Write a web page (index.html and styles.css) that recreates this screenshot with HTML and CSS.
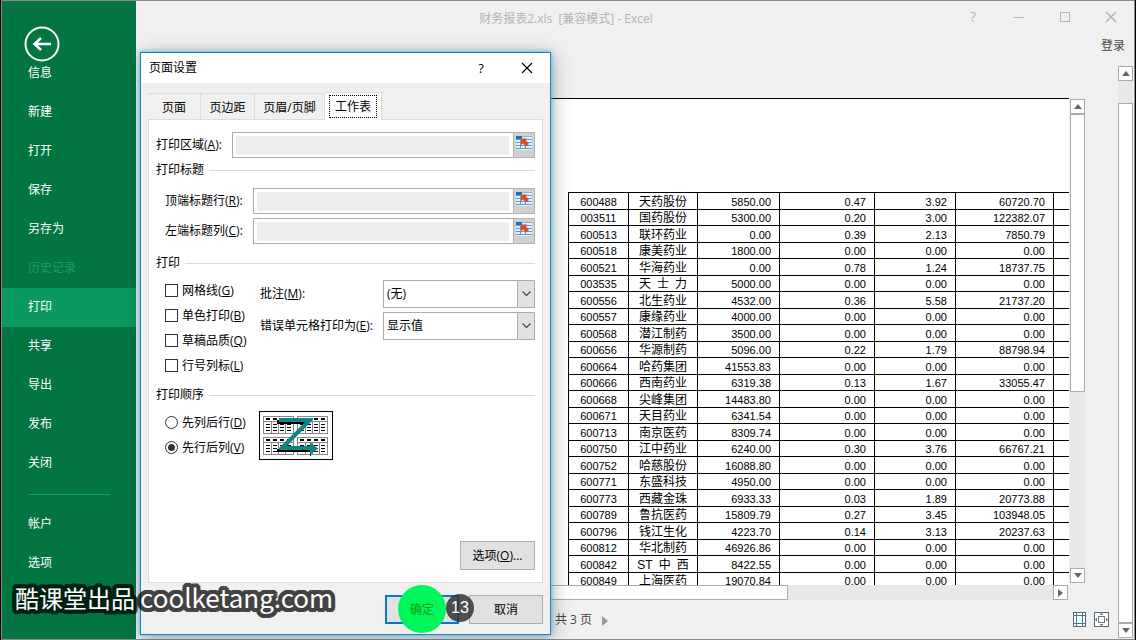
FILE: index.html
```html
<!DOCTYPE html>
<html lang="zh-CN">
<head>
<meta charset="utf-8">
<title>财务报表2.xls [兼容模式] - Excel</title>
<link rel="stylesheet" href="styles.css">
</head>
<body>
<div class="window">
  <aside class="sidebar">
    <button class="back" type="button" aria-label="返回">
      <svg width="36" height="36" viewBox="0 0 36 36" fill="none" stroke="#fff"><circle cx="18" cy="18" r="16.5" stroke-width="2"/><path d="M10.500 18H27M17 12L10.500 18L17 24" stroke-width="2.500"/></svg>
    </button>
    <nav class="menu">
      <a href="#">信息</a>
      <a href="#">新建</a>
      <a href="#">打开</a>
      <a href="#">保存</a>
      <a href="#">另存为</a>
      <a href="#" class="dim">历史记录</a>
      <a href="#" class="active">打印</a>
      <a href="#">共享</a>
      <a href="#">导出</a>
      <a href="#">发布</a>
      <a href="#">关闭</a>
      <hr>
      <a href="#">帐户</a>
      <a href="#">选项</a>
    </nav>
  </aside>

  <main class="main">
    <header class="titlebar">
      <h1>财务报表2.xls&nbsp; [兼容模式] - Excel</h1>
      <button type="button" aria-label="帮助">?</button>
      <button type="button" aria-label="最小化"><svg width="12" height="12" viewBox="0 0 12 12"><path d="M1 6.500H11" stroke="currentColor"/></svg></button>
      <button type="button" aria-label="最大化"><svg width="12" height="12" viewBox="0 0 12 12"><rect x="1.500" y="1.500" width="9" height="9" fill="none" stroke="currentColor"/></svg></button>
      <button type="button" aria-label="关闭"><svg width="12" height="12" viewBox="0 0 12 12"><path d="M1 1L11 11M11 1L1 11" stroke="currentColor" stroke-width="1.500"/></svg></button>
    </header>
    <div class="account"><a href="#">登录</a></div>
    <div class="workspace">
      <div class="settings"></div>
      <section class="preview">
        <div class="preview-body">
          <div class="page">
            <table class="sheet">
              <colgroup><col class="c-code"><col class="c-name"><col class="c-a"><col class="c-b"><col class="c-c"><col class="c-d"><col class="c-e"></colgroup>
              <tbody>
              <tr><td>600488</td><td>天药股份</td><td>5850.00</td><td>0.47</td><td>3.92</td><td>60720.70</td><td></td></tr>
              <tr><td>003511</td><td>国药股份</td><td>5300.00</td><td>0.20</td><td>3.00</td><td>122382.07</td><td></td></tr>
              <tr><td>600513</td><td>联环药业</td><td>0.00</td><td>0.39</td><td>2.13</td><td>7850.79</td><td></td></tr>
              <tr><td>600518</td><td>康美药业</td><td>1800.00</td><td>0.00</td><td>0.00</td><td>0.00</td><td></td></tr>
              <tr><td>600521</td><td>华海药业</td><td>0.00</td><td>0.78</td><td>1.24</td><td>18737.75</td><td></td></tr>
              <tr><td>003535</td><td>天&ensp;士&ensp;力</td><td>5000.00</td><td>0.00</td><td>0.00</td><td>0.00</td><td></td></tr>
              <tr><td>600556</td><td>北生药业</td><td>4532.00</td><td>0.36</td><td>5.58</td><td>21737.20</td><td></td></tr>
              <tr><td>600557</td><td>康缘药业</td><td>4000.00</td><td>0.00</td><td>0.00</td><td>0.00</td><td></td></tr>
              <tr><td>600568</td><td>潜江制药</td><td>3500.00</td><td>0.00</td><td>0.00</td><td>0.00</td><td></td></tr>
              <tr><td>600656</td><td>华源制药</td><td>5096.00</td><td>0.22</td><td>1.79</td><td>88798.94</td><td></td></tr>
              <tr><td>600664</td><td>哈药集团</td><td>41553.83</td><td>0.00</td><td>0.00</td><td>0.00</td><td></td></tr>
              <tr><td>600666</td><td>西南药业</td><td>6319.38</td><td>0.13</td><td>1.67</td><td>33055.47</td><td></td></tr>
              <tr><td>600668</td><td>尖峰集团</td><td>14483.80</td><td>0.00</td><td>0.00</td><td>0.00</td><td></td></tr>
              <tr><td>600671</td><td>天目药业</td><td>6341.54</td><td>0.00</td><td>0.00</td><td>0.00</td><td></td></tr>
              <tr><td>600713</td><td>南京医药</td><td>8309.74</td><td>0.00</td><td>0.00</td><td>0.00</td><td></td></tr>
              <tr><td>600750</td><td>江中药业</td><td>6240.00</td><td>0.30</td><td>3.76</td><td>66767.21</td><td></td></tr>
              <tr><td>600752</td><td>哈慈股份</td><td>16088.80</td><td>0.00</td><td>0.00</td><td>0.00</td><td></td></tr>
              <tr><td>600771</td><td>东盛科技</td><td>4950.00</td><td>0.00</td><td>0.00</td><td>0.00</td><td></td></tr>
              <tr><td>600773</td><td>西藏金珠</td><td>6933.33</td><td>0.03</td><td>1.89</td><td>20773.88</td><td></td></tr>
              <tr><td>600789</td><td>鲁抗医药</td><td>15809.79</td><td>0.27</td><td>3.45</td><td>103948.05</td><td></td></tr>
              <tr><td>600796</td><td>钱江生化</td><td>4223.70</td><td>0.14</td><td>3.13</td><td>20237.63</td><td></td></tr>
              <tr><td>600812</td><td>华北制药</td><td>46926.86</td><td>0.00</td><td>0.00</td><td>0.00</td><td></td></tr>
              <tr><td>600842</td><td>ST&ensp;中&ensp;西</td><td>8422.55</td><td>0.00</td><td>0.00</td><td>0.00</td><td></td></tr>
              <tr><td>600849</td><td>上海医药</td><td>19070.84</td><td>0.00</td><td>0.00</td><td>0.00</td><td></td></tr>
              </tbody>
            </table>
          </div>
          <div class="vscroll">
            <button type="button" aria-label="向上"><svg width="8" height="5" viewBox="0 0 8 5"><path d="M0 5L4 0L8 5Z" fill="currentColor"/></svg></button>
            <div class="thumb"></div>
            <div class="track"></div>
            <button type="button" aria-label="向下"><svg width="8" height="5" viewBox="0 0 8 5"><path d="M0 0L4 5L8 0Z" fill="currentColor"/></svg></button>
          </div>
        </div>
        <div class="hscroll">
          <div class="thumb"></div>
          <div class="track"></div>
          <button type="button" aria-label="向右"><svg width="5" height="8" viewBox="0 0 5 8"><path d="M0 0L5 4L0 8Z" fill="currentColor"/></svg></button>
        </div>
        <footer class="pager">
          <span>共 3 页</span>
          <button type="button" class="next" aria-label="下一页"><svg width="6" height="10" viewBox="0 0 6 10"><path d="M0 0L6 5L0 10Z" fill="#999"/></svg></button>
          <button type="button" class="tool" aria-label="显示边距"><svg width="14" height="16" viewBox="0 0 14 16" fill="none"><rect x=".5" y=".5" width="12" height="14" fill="#fff" stroke="#666"/><path d="M3.500 1V15M9.500 1V15M1 3.500H12M1 11.500H12" stroke="#2f7cb5"/></svg></button>
          <button type="button" class="tool" aria-label="缩放到页面"><svg width="16" height="16" viewBox="0 0 16 16" fill="none"><rect x=".5" y=".5" width="14" height="14" fill="#fff" stroke="#666"/><rect x="4.500" y="4.500" width="6" height="6" stroke="#777"/><path d="M5.500 3L7.500 1L9.500 3ZM5.500 12L7.500 14L9.500 12ZM3 5.500L1 7.500L3 9.500ZM12 5.500L14 7.500L12 9.500Z" fill="#2f7cb5"/></svg></button>
        </footer>
      </section>
      <div class="vscroll outer">
        <button type="button" aria-label="向上"><svg width="8" height="5" viewBox="0 0 8 5"><path d="M0 5L4 0L8 5Z" fill="currentColor"/></svg></button>
        <div class="track"></div>
        <div class="thumb"></div>
        <button type="button" aria-label="向下"><svg width="8" height="5" viewBox="0 0 8 5"><path d="M0 0L4 5L8 0Z" fill="currentColor"/></svg></button>
      </div>
    </div>
  </main>
</div>

<svg class="defs" width="0" height="0" aria-hidden="true">
  <symbol id="pick" viewBox="0 0 16 14">
    <rect x="0" y="0" width="16" height="14" fill="#e6f1f9"/>
    <path d="M0 3.500H16M0 6.500H16M0 9.500H16M0 12.500H16M4.500 3V13M9.500 3V13" stroke="#5b9bd0"/>
    <path d="M0 .5H16" stroke="#7fb0da"/>
    <path d="M0 0H6V3H0Z" fill="#1c70b8"/>
    <path d="M5 2.500H11L10 4.500L13 8L10 10.500L7 7.500L5 9Z" fill="#e04a22"/>
  </symbol>
  <symbol id="mini" viewBox="0 0 31 18">
    <rect x=".5" y=".5" width="30" height="17" fill="#fff" stroke="#888"/>
    <path d="M1 5.500H30M8.500 5V17M15.500 5V17M22.500 5V17" stroke="#888"/>
    <path d="M3 3H7M10 3H14M17 3H21M24 3H28" stroke="#000" stroke-width="2"/>
    <path d="M3 8.500H7M10 8.500H14M17 8.500H21M24 8.500H28M3 11.500H7M10 11.500H14M17 11.500H21M24 11.500H28M3 14.500H7M10 14.500H14M17 14.500H21M24 14.500H28" stroke="#000"/>
  </symbol>
</svg>

<div class="dialog" role="dialog" aria-labelledby="dlg-title">
  <header class="dialog-head">
    <h2 id="dlg-title">页面设置</h2>
    <button type="button" aria-label="帮助">?</button>
    <button type="button" aria-label="关闭对话框"><svg width="12" height="12" viewBox="0 0 12 12"><path d="M1 1L11 11M11 1L1 11" stroke="#000" stroke-width="1.200"/></svg></button>
  </header>
  <div class="dialog-body">
    <div class="tabs" role="tablist">
      <button type="button" role="tab" class="tab t1">页面</button>
      <button type="button" role="tab" class="tab t2">页边距</button>
      <button type="button" role="tab" class="tab t3">页眉/页脚</button>
      <button type="button" role="tab" class="tab selected" aria-selected="true"><span>工作表</span></button>
    </div>
    <div class="panel">
      <div class="field area"><label for="area">打印区域(<u>A</u>):</label><input id="area" type="text"><button type="button" aria-label="选择区域"><svg width="16" height="14"><use href="#pick"/></svg></button></div>
      <h3>打印标题</h3>
      <div class="titles">
        <div class="field"><label for="rows">顶端标题行(<u>R</u>):</label><input id="rows" type="text"><button type="button" aria-label="选择行"><svg width="16" height="14"><use href="#pick"/></svg></button></div>
        <div class="field"><label for="cols">左端标题列(<u>C</u>):</label><input id="cols" type="text"><button type="button" aria-label="选择列"><svg width="16" height="14"><use href="#pick"/></svg></button></div>
      </div>
      <h3>打印</h3>
      <div class="print">
        <div class="options">
          <label><input type="checkbox"><span>网格线(<u>G</u>)</span></label>
          <label><input type="checkbox"><span>单色打印(<u>B</u>)</span></label>
          <label><input type="checkbox"><span>草稿品质(<u>Q</u>)</span></label>
          <label><input type="checkbox"><span>行号列标(<u>L</u>)</span></label>
        </div>
        <div class="choices">
          <div class="choice"><label for="notes">批注(<u>M</u>):</label><div class="select"><select id="notes"><option>(无)</option></select><span class="arrow"><svg width="9" height="6" viewBox="0 0 9 6"><path d="M.5 .5L4.500 4.500L8.500 .5" fill="none" stroke="#444" stroke-width="1.200"/></svg></span></div></div>
          <div class="choice"><label for="errors">错误单元格打印为(<u>E</u>):</label><div class="select"><select id="errors"><option>显示值</option></select><span class="arrow"><svg width="9" height="6" viewBox="0 0 9 6"><path d="M.5 .5L4.500 4.500L8.500 .5" fill="none" stroke="#444" stroke-width="1.200"/></svg></span></div></div>
        </div>
      </div>
      <h3>打印顺序</h3>
      <div class="order">
        <div class="options">
          <label><input type="radio" name="order"><span>先列后行(<u>D</u>)</span></label>
          <label><input type="radio" name="order" checked><span>先行后列(<u>V</u>)</span></label>
        </div>
        <svg class="diagram" width="74" height="49" viewBox="0 0 74 49">
          <rect x=".5" y=".5" width="73" height="48" fill="#fff" stroke="#000"/>
          <use href="#mini" x="4" y="5" width="31" height="18"/><use href="#mini" x="38" y="5" width="31" height="18"/>
          <use href="#mini" x="4" y="26" width="31" height="18"/><use href="#mini" x="38" y="26" width="31" height="18"/>
          <path d="M18 9H48V13H18ZM18 38H52V45H51V41H18Z" fill="#000"/>
          <path d="M20 7H54V9L28 35H51V31L59 37.500L51 44V39H20V37L46 11H20Z" fill="#0f8582"/>
        </svg>
      </div>
      <button type="button" class="btn more">选项(<u>O</u>)...</button>
    </div>
    <div class="actions">
      <button type="button" class="btn ok"><span class="ok-text">确定</span></button>
      <button type="button" class="btn">取消</button>
      <span class="step">13</span>
    </div>
  </div>
</div>
<div class="caption"><span class="zh" data-text="酷课堂出品">酷课堂出品</span><span class="en" data-text="coolketang.com">coolketang.com</span></div>
</body>
</html>
```
FILE: styles.css
```css
* { box-sizing: border-box; }
body {
  margin: 0;
  background: #000;
  font: 12px/16px "Open Sans", "Noto Sans CJK SC", sans-serif;
  color: #000;
}
h1, h2, h3 { margin: 0; font-size: 12px; font-weight: 400; }
button, input, select { font: inherit; color: inherit; margin: 0; padding: 0; border: 0; border-radius: 0; background: none; }
button { display: flex; align-items: center; justify-content: center; }
a { color: inherit; text-decoration: none; }
.defs { position: absolute; }

.window {
  display: flex;
  height: 100vh;
  margin: 0 1px;
  border: 1px solid #8a8a8a;
  background: #f0f0f0;
  overflow: hidden;
}

/* backstage navigation */
.sidebar { flex: none; width: 134px; padding-top: 25px; background: #037541; color: #fff; }
.back { margin-left: 22px; }
.menu { display: flex; flex-direction: column; margin-top: -8px; }
.menu a { height: 39px; padding-left: 26px; line-height: 38px; }
.menu .dim { color: #1f9c62; }
.menu .active { background: #0a9a60; }
.menu hr { width: 82px; height: 1px; margin: 11px 0 10px 26px; border: 0; background: #10a262; }

/* main area */
.main { flex: 1; min-width: 0; display: flex; flex-direction: column; }
.titlebar { display: flex; height: 31px; color: #b4b4b4; }
.titlebar h1 { flex: 1; padding-left: 46px; text-align: center; line-height: 36px; }
.titlebar button { width: 46px; font-size: 14px; }
.account { height: 33px; padding-right: 9px; text-align: right; line-height: 28px; color: #444; }
.workspace { flex: 1; min-height: 0; display: flex; }
.settings { flex: none; width: 414px; }
.preview { flex: 1; min-width: 0; display: flex; flex-direction: column; margin: 33px 32px 0 0; }
.preview-body { flex: 1; min-height: 0; display: flex; }
.page {
  flex: 1;
  min-width: 0;
  margin-right: 1px;
  padding: 93px 0 0 18px;
  border-top: 1px solid #000;
  background: #fff;
  overflow: hidden;
}

.sheet {
  width: 530px;
  table-layout: fixed;
  border-collapse: collapse;
  font: 11px/13px "Liberation Sans", "Noto Sans CJK SC", sans-serif;
}
.c-code { width: 60px; }
.c-name { width: 69px; }
.c-a { width: 82px; }
.c-b { width: 95px; }
.c-c { width: 81px; }
.c-d { width: 98px; }
.c-e { width: 45px; }
.sheet td { padding: 2px 8px 0 0; border: 1px solid #000; text-align: right; white-space: nowrap; }
.sheet td:nth-child(1), .sheet td:nth-child(2) { padding-right: 0; text-align: center; }
.sheet td:nth-child(2) { font-size: 12px; }
.sheet tr { height: 16px; }
.sheet tr:nth-child(odd) { height: 17px; }

/* scroll bars */
.vscroll { flex: none; width: 16px; display: flex; flex-direction: column; padding: 1px 0 2px; color: #666; }
.vscroll button, .hscroll button { flex: none; width: 15px; height: 15px; border: 1px solid #ababab; background: #fff; }
.vscroll .thumb { width: 15px; flex: 277; border: 1px solid #ababab; background: #fff; }
.vscroll .track { width: 15px; flex: 177; background: #e8e8e8; }
.outer { padding: 1px 0; }
.outer .track { flex: 22; }
.outer .thumb { flex: 520; }
.hscroll { flex: none; display: flex; height: 15px; margin-right: 18px; color: #666; }
.hscroll .thumb { flex: 236; border: 1px solid #ababab; background: #fff; }
.hscroll .track { flex: 266; background: #e8e8e8; }
.pager { flex: none; display: flex; align-items: center; height: 39px; margin-right: -24px; padding-left: 5px; color: #444; }
.next { margin: 2px auto 0 10px; }
.tool { margin-left: 7px; }

/* page setup dialog */
.dialog {
  position: absolute;
  left: 140px;
  top: 52px;
  width: 411px;
  border: 1px solid #1883c4;
  background: #f0f0f0;
  box-shadow: 0 0 5px #5cb4e0, 2px 3px 18px rgba(0, 0, 0, .3);
}
.dialog-head { display: flex; height: 30px; background: #fff; }
.dialog-head h2 { flex: 1; padding-left: 8px; line-height: 29px; }
.dialog-head button { width: 46px; font-size: 13px; }
.dialog-body { padding: 9px 7px 10px; }
.tabs { display: flex; align-items: flex-end; }
.tab { height: 26px; padding-top: 2px; border: 1px solid #dcdcdc; border-width: 1px 1px 0 0; }
.t1 { width: 53px; }
.t2 { width: 54px; }
.t3 { width: 70px; }
.selected { width: 57px; height: 28px; margin-bottom: -1px; padding: 0; background: #fff; z-index: 1; }
.selected span { padding: 3px 5px 2px; border: 1px dotted #000; }
.panel { display: flex; flex-direction: column; padding: 12px 7px; border: 1px solid #dcdcdc; background: #fff; }
.field { display: flex; align-items: center; height: 26px; }
.field label { width: 88px; }
.area label { width: 76px; }
.field input { flex: 1; min-width: 0; height: 26px; padding: 3px 4px 2px 3px; border: 1px solid #ababab; border-right: 0; background: #eee content-box; }
.field button { width: 22px; height: 26px; padding-bottom: 4px; border: 1px solid #b4b4b4; background: #d0d0d0; }
.panel h3 { display: flex; align-items: center; height: 24px; line-height: 18px; }
.panel h3::after { content: ""; flex: 1; height: 1px; margin-left: 5px; background: #dcdcdc; }
.titles { display: flex; flex-direction: column; gap: 4px; margin: 6px 0 7px; padding-left: 9px; }
.print { display: flex; margin: 3px 0 5px; }
.options { width: 104px; padding-left: 9px; }
.options label { display: flex; align-items: center; gap: 4px; height: 25px; white-space: nowrap; }
.options input { appearance: none; flex: none; width: 13px; height: 13px; border: 1px solid #333; background: #fff; }
.options input[type="radio"] { border-radius: 50%; }
.options input:checked { background: radial-gradient(circle, #333 3px, #fff 4px); }
.choices { flex: 1; display: flex; flex-direction: column; gap: 4px; padding-top: 2px; }
.choice { display: flex; align-items: center; justify-content: space-between; white-space: nowrap; }
.select { position: relative; display: flex; width: 152px; height: 28px; }
.select select { appearance: none; flex: 1; padding-left: 3px; border: 1px solid #ababab; }
.arrow {
  position: absolute;
  right: 0;
  top: 0;
  bottom: 0;
  width: 18px;
  display: flex;
  align-items: center;
  justify-content: center;
  border: 1px solid #ababab;
  background: #e1e1e1;
  pointer-events: none;
}
.order { display: flex; align-items: flex-end; margin-top: 3px; }
.diagram { margin-left: -1px; }
.btn { width: 74px; height: 29px; border: 1px solid #adadad; background: #e1e1e1; }
.more { align-self: flex-end; width: 75px; margin-top: 81px; }
.actions { position: relative; display: flex; justify-content: flex-end; gap: 10px; padding-top: 12px; }
.ok { position: relative; border: 2px solid #0f74c8; }
.ok::before {
  content: "";
  position: absolute;
  left: 11px;
  top: -12px;
  width: 48px;
  height: 48px;
  border-radius: 50%;
  background: #00f65b;
}
.ok-text { position: relative; color: #12a012; }
.step {
  position: absolute;
  right: 69px;
  top: 11px;
  width: 28px;
  height: 28px;
  border-radius: 50%;
  background: rgba(50, 50, 50, .85);
  color: #fff;
  font: 16px/28px "Liberation Sans", sans-serif;
  text-align: center;
}

/* caption over the screen */
.caption {
  position: absolute;
  left: 15px;
  bottom: 24px;
  display: flex;
  align-items: baseline;
  gap: 5px;
  color: #fff;
  font: 24px/36px "Noto Sans CJK SC", sans-serif;
}
.caption span { position: relative; isolation: isolate; }
.caption .en { font-size: 26px; }
.caption span::before {
  content: attr(data-text);
  position: absolute;
  left: 0;
  top: 0;
  z-index: -1;
  color: #000;
  text-shadow:
    4px 0 #000, -4px 0 #000, 0 4px #000, 0 -4px #000,
    3px 3px #000, -3px 3px #000, 3px -3px #000, -3px -3px #000,
    2px 0 #000, -2px 0 #000, 0 2px #000, 0 -2px #000,
    4px 2px #000, -4px 2px #000, 4px -2px #000, -4px -2px #000,
    2px 4px #000, -2px 4px #000, 2px -4px #000, -2px -4px #000;
  opacity: .72;
}
```
